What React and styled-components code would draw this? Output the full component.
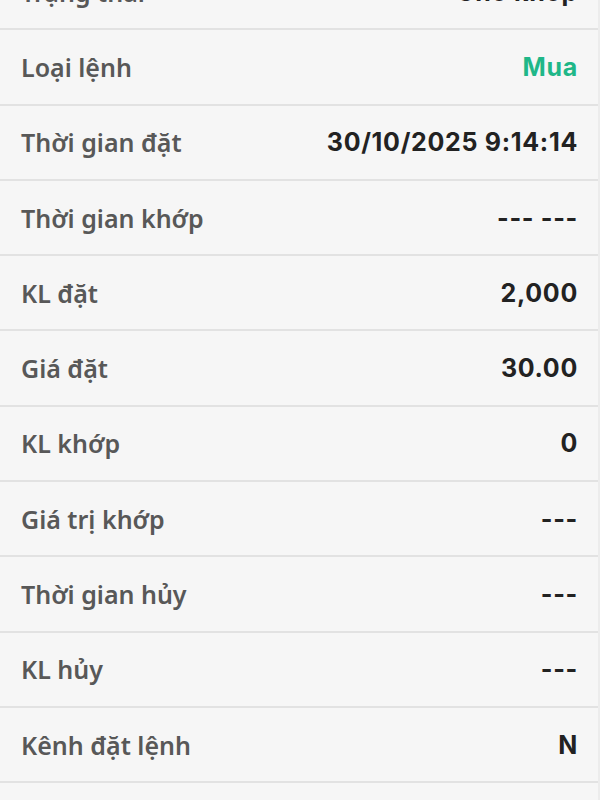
import React from "react";
import { styled, createGlobalStyle } from "styled-components";

const rows = [
  { label: "Trạng thái", value: "Chờ khớp" },
  { label: "Loại lệnh", value: "Mua", tone: "buy" },
  { label: "Thời gian đặt", value: "30/10/2025 9:14:14" },
  { label: "Thời gian khớp", value: "--- ---" },
  { label: "KL đặt", value: "2,000" },
  { label: "Giá đặt", value: "30.00" },
  { label: "KL khớp", value: "0" },
  { label: "Giá trị khớp", value: "---" },
  { label: "Thời gian hủy", value: "---" },
  { label: "KL hủy", value: "---" },
  { label: "Kênh đặt lệnh", value: "N" },
  { label: "", value: "" },
];

const OrderDetail = () => {
  return (
    <Screen>
      <List>
        {rows.map((row, i) => (
          <Row key={i}>
            <Label>{row.label}</Label>
            <Value tone={row.tone}>{row.value}</Value>
          </Row>
        ))}
      </List>
    </Screen>
  );
};

const GlobalStyle = createGlobalStyle`
  html, body {
    margin: 0;
    padding: 0;
    background: #f6f6f6;
    overflow: hidden;
  }
`;

const Screen = styled.div`
  width: 600px;
  height: 800px;
  overflow: hidden;
  background: #f6f6f6;
  border-right: 2px solid #ececec;
  box-sizing: border-box;
`;

const List = styled.div`
  display: flex;
  flex-direction: column;
  margin-top: -45px;
`;

const Row = styled.div`
  display: flex;
  align-items: center;
  justify-content: space-between;
  height: 73.3px;
  padding: 0 20px 0 21px;
  border-bottom: 2px solid #e2e2e2;
  flex-shrink: 0;
`;

const Label = styled.span`
  font-family: "Noto Sans", "Open Sans", sans-serif;
  font-size: 25px;
  font-weight: 600;
  color: #585858;
`;

const Value = styled.span`
  font-family: Inter, "Noto Sans", sans-serif;
  font-size: 25px;
  font-weight: 700;
  letter-spacing: 0.7px;
  color: ${({ tone }) => (tone === "buy" ? "#1fb788" : "#222222")};
`;

export default function App() {
  return (
    <>
      <GlobalStyle />
      <OrderDetail />
    </>
  );
}
